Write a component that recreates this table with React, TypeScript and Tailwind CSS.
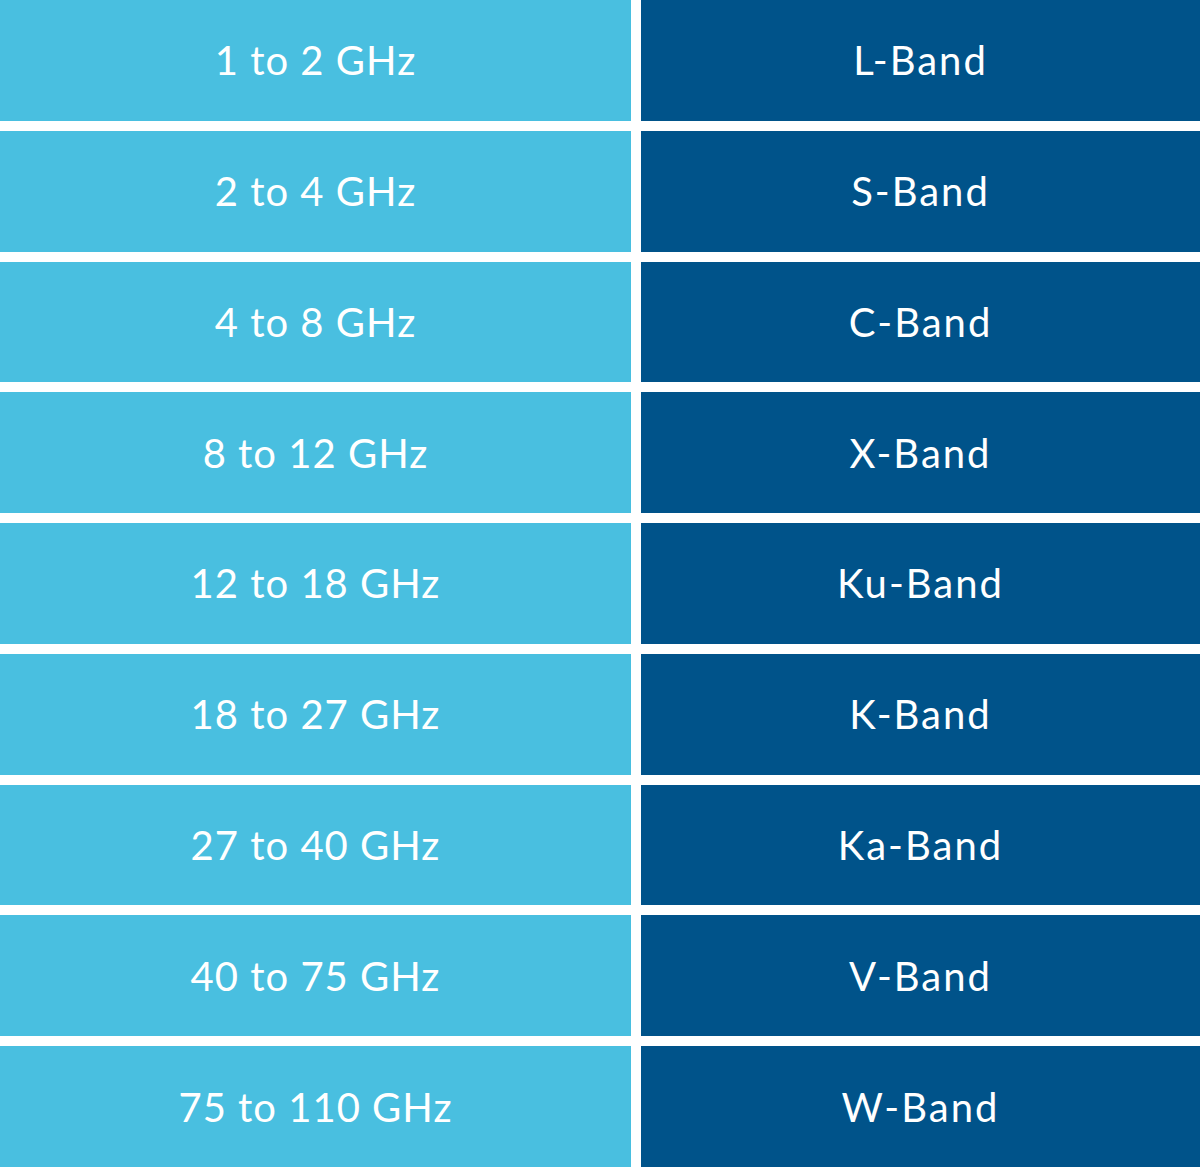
const bands = [
  ['1 to 2 GHz', 'L-Band'],
  ['2 to 4 GHz', 'S-Band'],
  ['4 to 8 GHz', 'C-Band'],
  ['8 to 12 GHz', 'X-Band'],
  ['12 to 18 GHz', 'Ku-Band'],
  ['18 to 27 GHz', 'K-Band'],
  ['27 to 40 GHz', 'Ka-Band'],
  ['40 to 75 GHz', 'V-Band'],
  ['75 to 110 GHz', 'W-Band'],
]

export default function App() {
  return (
    <div className="w-[1200px] h-[1167px] bg-white grid grid-cols-[631px_559px] grid-rows-9 gap-x-[10px] gap-y-[10px] font-['Lato',sans-serif] text-[40px] tracking-[1px] text-white">
      {bands.map(([freq, name]) => (
        <>
          <div key={freq} className="bg-[#49bfe0] flex items-center justify-center">{freq}</div>
          <div key={name} className="bg-[#00538a] flex items-center justify-center tracking-[2px]">{name}</div>
        </>
      ))}
    </div>
  )
}
